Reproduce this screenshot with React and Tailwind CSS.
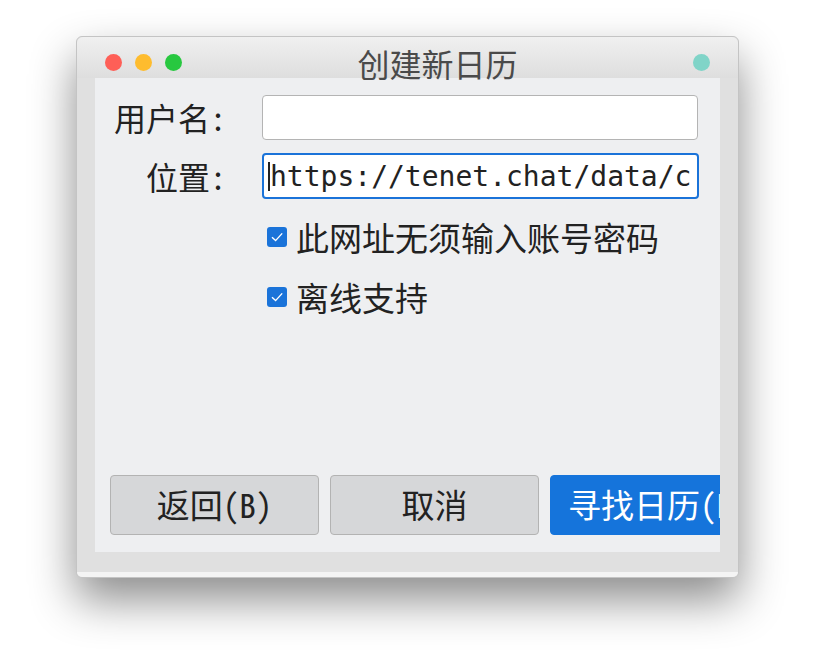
import { useState } from "react";

const mono = { fontFamily: '"Noto Sans Mono CJK SC", "Noto Sans CJK SC", sans-serif' };

function CheckRow({ label, checked, onToggle }) {
  return (
    <label className="flex items-center h-[36px] cursor-pointer">
      <span
        onClick={onToggle}
        className="w-[20px] h-[20px] rounded-[3px] bg-[#1a73d9] flex items-center justify-center"
      >
        {checked && (
          <svg width="20" height="20" viewBox="0 0 20 20">
            <path d="M5 10.3 L8.6 13.6 L15.2 6.4" fill="none" stroke="white" strokeWidth="1.4" />
          </svg>
        )}
      </span>
      <span className="ml-[9px] text-[33px] leading-[36px] text-[#222]">{label}</span>
    </label>
  );
}

export default function App() {
  const [noAuth, setNoAuth] = useState(true);
  const [offline, setOffline] = useState(true);
  const [user, setUser] = useState("");
  const [url, setUrl] = useState("https://tenet.chat/data/c");

  return (
    <div
      className="min-h-[665px] bg-white pt-[36px] flex justify-center"
      style={{ fontFamily: '"Noto Sans CJK SC", sans-serif' }}
    >
      <div className="w-[663px] h-[542px] flex flex-col rounded-[6px] border border-[#c4c4c4] bg-[#e0e0e0] shadow-[0_22px_45px_rgba(0,0,0,0.45)]">
        {/* title bar */}
        <div className="relative z-10 h-[41px] flex items-start rounded-t-[6px] bg-gradient-to-b from-[#f0f0f0] to-[#dedede]">
          <div className="flex gap-[13px] pl-[28px] pt-[17px]">
            <span className="w-[17px] h-[17px] rounded-full bg-[#fe5f57]" />
            <span className="w-[17px] h-[17px] rounded-full bg-[#febc2e]" />
            <span className="w-[17px] h-[17px] rounded-full bg-[#28c840]" />
          </div>
          <div className="flex-1 text-center text-[32px] leading-[32px] mt-[10px] text-[#4a4a4a]">
            创建新日历
          </div>
          <div className="pr-[28px] pt-[17px]">
            <span className="block w-[17px] h-[17px] rounded-full bg-[#80d4c8]" />
          </div>
        </div>

        {/* body */}
        <div className="flex-1 flex flex-col px-[18px]">
          <div className="w-[625px] h-[474px] bg-[#eeeff1] overflow-hidden flex flex-col">
            <div className="grid grid-cols-[167px_437px] gap-y-[13px] pt-[17px]">
              <div className="h-[45px] flex items-center justify-end pr-[36px] text-[32px] leading-[45px] text-[#222]" style={mono}>用户名:</div>
              <input
                value={user}
                onChange={(e) => setUser(e.target.value)}
                className="h-[45px] w-[436px] rounded-[4px] border border-[#b4b4b4] bg-white px-2 outline-none"
              />
              <div className="h-[46px] flex items-center justify-end pr-[36px] text-[32px] leading-[46px] text-[#222]" style={mono}>位置:</div>
              <div className="relative h-[46px]">
                <input
                  value={url}
                  onChange={(e) => setUrl(e.target.value)}
                  className="h-[46px] w-[437px] rounded-[4px] border-2 border-[#1a73d9] bg-white pl-[6px] text-[28px] text-[#222] outline-none caret-black"
                  style={{ fontFamily: '"DejaVu Sans Mono", monospace' }}
                />
                <span className="absolute left-[6px] top-[9px] w-[2px] h-[29px] bg-[#222]" />
              </div>
            </div>

            <div className="flex flex-col gap-[24px] pl-[172px] mt-[20px]">
              <CheckRow label="此网址无须输入账号密码" checked={noAuth} onToggle={() => setNoAuth(!noAuth)} />
              <CheckRow label="离线支持" checked={offline} onToggle={() => setOffline(!offline)} />
            </div>

            <div className="flex-1" />

            <div className="flex gap-[11px] pl-[15px] pb-[17px]" style={mono}>
              <button className="shrink-0 w-[209px] h-[60px] rounded-[4px] border border-[#b3b3b3] bg-[#d6d7d9] text-[33px] text-[#222]">
                返回(B)
              </button>
              <button className="shrink-0 w-[209px] h-[60px] rounded-[4px] border border-[#b3b3b3] bg-[#d6d7d9] text-[33px] text-[#222]">
                取消
              </button>
              <button className="shrink-0 w-[209px] h-[60px] rounded-[4px] border border-[#1574db] bg-[#1574db] text-[33px] text-white text-left pl-[17px] whitespace-nowrap overflow-hidden">
                寻找日历(B)
              </button>
            </div>
          </div>
          <div className="h-[20px]" />
        </div>
        <div className="h-[6px] rounded-b-[6px] bg-[#f4f4f4]" />
      </div>
    </div>
  );
}
